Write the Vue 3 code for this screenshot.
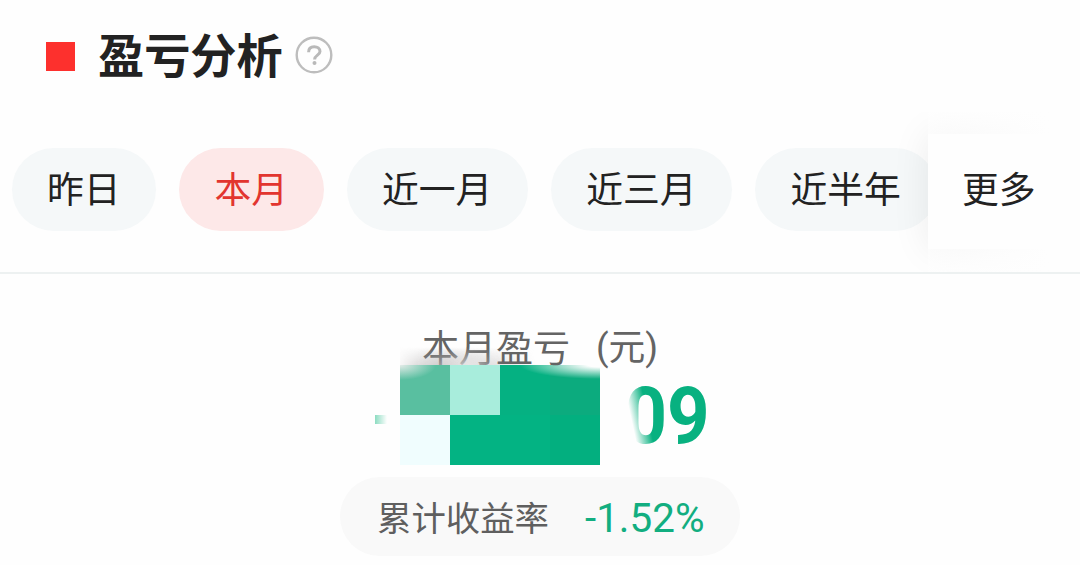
<script setup>
import { ref } from 'vue';

const ranges = ["昨日", "本月", "近一月", "近三月", "近半年"];
const current = ref(1);

const tiles = ["t1", "t2", "t3", "t4", "t5", "t6", "t7", "t8"];
</script>

<template>
    <div class="page">
        <div class="header">
            <span class="mark"></span>
            <h1>盈亏分析</h1>
            <svg class="help" viewBox="0 0 38 38" fill="none">
                <circle cx="19" cy="19" r="17.3" stroke="#bdbdbd" stroke-width="2.4" />
                <path d="M13.6 16.2C13.6 12.4 16 10.7 19.2 10.7S25 12.5 25 15.6C25 19 19.6 19.4 19.6 23.4" stroke="#b9b9b9" stroke-width="3" />
                <circle cx="19.5" cy="27" r="2" fill="#b9b9b9" />
            </svg>
        </div>

        <div class="tabs">
            <div class="list">
                <div v-for="(item, index) in ranges" :key="item" class="tab" :class="{ active: current === index }" @click="current = index">
                    {{ item }}
                </div>
            </div>
            <div class="more"><span>更多</span></div>
        </div>

        <div class="summary">
            <div class="label"><span>本月盈亏</span><span class="unit">(元)</span></div>
            <div class="amount">
                <span class="minus"></span>
                <span class="digits">09</span>
                <div class="haze"></div>
                <div class="mosaic">
                    <i v-for="t in tiles" :key="t" :class="t"></i>
                </div>
            </div>
            <div class="rate">
                <span>累计收益率</span>
                <span class="value">-1.52%</span>
            </div>
        </div>
    </div>
</template>

<style>
body {
    background: #fefefe;
    overflow: hidden;
}
</style>

<style scoped>
.page {
    width: 1080px;
    height: 565px;
    overflow: hidden;
    background: #fefefe;
    color: #222;
    font-family: Roboto, "Noto Sans CJK SC", sans-serif;
}

.header {
    display: flex;
    align-items: center;
    height: 112px;
    padding-left: 46px;
    box-sizing: border-box;
}

.mark {
    width: 29px;
    height: 29px;
    margin-top: 1px;
    background: #fd302d;
}

h1 {
    margin: 0 0 7px 23px;
    font-family: "Noto Sans CJK SC", sans-serif;
    font-size: 46.2px;
    line-height: 60px;
    font-weight: 700;
}

.help {
    width: 38px;
    height: 38px;
    margin: 0 0 2px 12px;
}

.tabs {
    display: flex;
    align-items: center;
    height: 162px;
    padding-bottom: 5px;
    box-sizing: border-box;
    border-bottom: 2px solid #edf1f1;
    overflow: hidden;
}

.list {
    display: flex;
    gap: 23.2px;
    width: 928px;
    padding-left: 12px;
    box-sizing: border-box;
    overflow: hidden;
}

.tab {
    flex: none;
    height: 83px;
    padding: 0 35.7px 0 35px;
    border-radius: 42px;
    background: #f5f8f9;
    font-family: "Noto Sans CJK SC", sans-serif;
    font-size: 36.8px;
    line-height: 78px;
}

.active {
    background: #fde8e8;
    color: #e2352f;
}

.more {
    position: relative;
    width: 152px;
    height: 115px;
    margin-top: 3px;
    padding-left: 34px;
    box-sizing: border-box;
    background: #fefefe;
    box-shadow: 0 0 36px rgba(0, 0, 0, 0.08);
    clip-path: inset(-40px 0 -40px -60px);
    font-family: "Noto Sans CJK SC", sans-serif;
    font-size: 36.8px;
    line-height: 107px;
}

/* the shadow fades out towards the right edge */
.more::after {
    content: "";
    position: absolute;
    inset: -40px 0 -40px 0;
    background: linear-gradient(90deg, rgba(254, 254, 254, 0.5), #fefefe 80%);
}

.more span {
    position: relative;
    z-index: 1;
}

.summary {
    display: flex;
    flex-direction: column;
    align-items: center;
    padding-top: 46px;
}

.label {
    position: relative;
    z-index: 1;
    display: flex;
    gap: 26px;
    height: 53px;
    font-family: "Noto Sans CJK SC", sans-serif;
    font-size: 37px;
    line-height: 52px;
    color: #646464;
}

/* lower strokes of the first characters are smeared away */
.label::after {
    content: "";
    position: absolute;
    left: -4px;
    top: 28px;
    width: 84px;
    height: 17px;
    background: linear-gradient(180deg, rgba(248, 246, 246, 0), rgba(240, 238, 238, 0.7));
    -webkit-mask-image: linear-gradient(90deg, rgba(0, 0, 0, 0.2), #000 60%, transparent);
    mask-image: linear-gradient(90deg, rgba(0, 0, 0, 0.2), #000 60%, transparent);
}

.unit {
    padding-top: 2px;
    font-family: Roboto, "Noto Sans CJK SC", sans-serif;
    font-size: 36.8px;
}

.amount {
    position: relative;
    display: flex;
    justify-content: space-between;
    width: 330px;
    height: 104px;
}

.minus {
    width: 12px;
    height: 9px;
    margin-top: 42px;
    background: linear-gradient(90deg, #8cdcc1, rgba(140, 220, 193, 0));
}

.digits {
    font-size: 79px;
    line-height: 86px;
    font-weight: 700;
    letter-spacing: 0;
    margin-right: -5px;
    transform: scaleX(0.94);
    transform-origin: right;
    color: #08b180;
}

.haze {
    position: absolute;
    left: 225px;
    top: 0;
    width: 56px;
    height: 90px;
    background: linear-gradient(78deg, #fefefe 54%, rgba(254, 254, 254, 0) 77%);
}

.mosaic {
    position: absolute;
    left: 25px;
    top: -8px;
    width: 200px;
    height: 100px;
    display: grid;
    grid-template-columns: repeat(4, 50px);
    grid-template-rows: repeat(2, 50px);
}

/* grey smear above the tiles */
.mosaic::before {
    content: "";
    position: absolute;
    left: 0;
    top: -18px;
    width: 150px;
    height: 18px;
    background: linear-gradient(180deg, rgba(254, 254, 254, 0), rgba(175, 172, 172, 0.75));
    -webkit-mask-image: linear-gradient(90deg, rgba(0, 0, 0, 0.1), #000 25%, #000 32%, transparent 90%);
    mask-image: linear-gradient(90deg, rgba(0, 0, 0, 0.1), #000 25%, #000 32%, transparent 90%);
}

/* soft upper right edge */
.mosaic::after {
    content: "";
    position: absolute;
    right: 0;
    top: 0;
    width: 90px;
    height: 16px;
    background: radial-gradient(ellipse 80px 14px at 100% 0, #fefefe 15%, rgba(254, 254, 254, 0));
}

.t1 {
    background: radial-gradient(ellipse 36px 15px at 0 0, #e4ebe8, rgba(228, 235, 232, 0)), #59bfa0;
}

.t2 {
    background: #a8eddc;
}

.t3 {
    background: #05b182;
}

.t4 {
    background: #0cab7e;
}

.t5 {
    background: #f0fdfe;
}

.t6,
.t7 {
    background: #03b383;
}

.t8 {
    background: #03af7f;
}

.rate {
    display: flex;
    align-items: center;
    gap: 36px;
    width: 400px;
    height: 79px;
    padding: 0 0 0 37px;
    box-sizing: border-box;
    border-radius: 40px;
    background: #f9f9f9;
    color: #5f5f5f;
    font-family: "Noto Sans CJK SC", sans-serif;
    font-size: 34.4px;
    line-height: 77px;
}

.value {
    padding-top: 4px;
    font-family: Roboto, sans-serif;
    font-size: 40.4px;
    color: #12ae80;
}
</style>
